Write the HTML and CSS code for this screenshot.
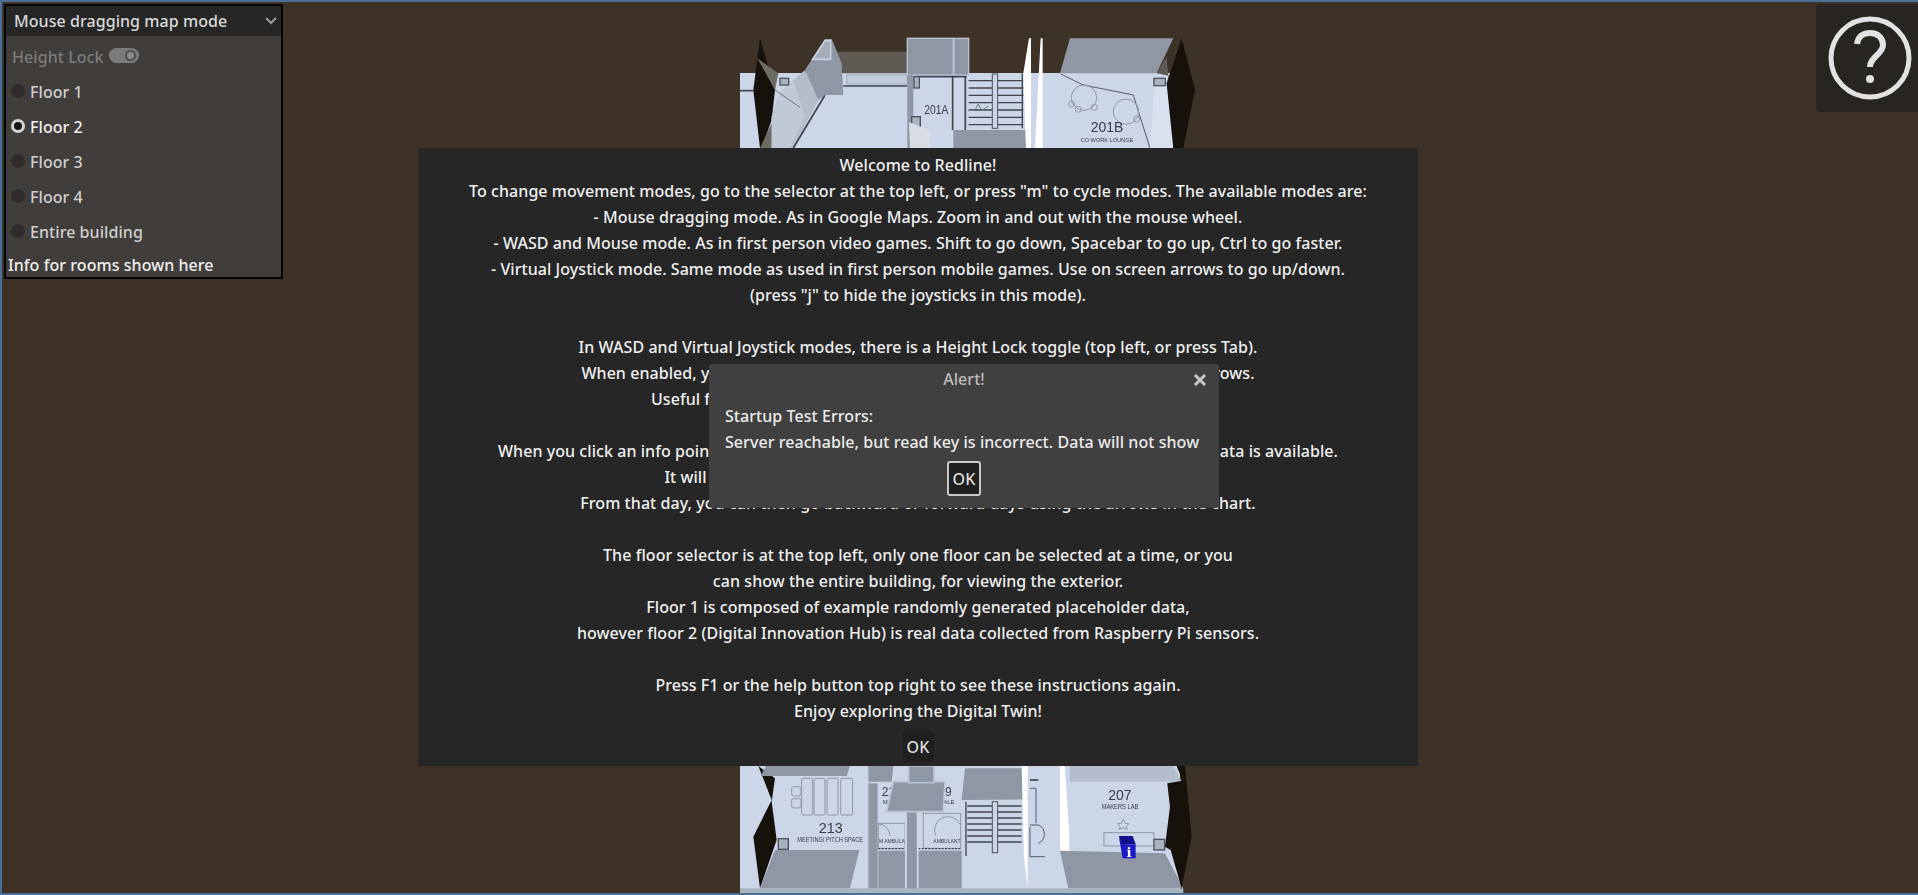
FILE: index.html
```html
<!DOCTYPE html>
<html lang="en">
<head>
    <meta charset="UTF-8">
    <title>Redline</title>
    <link rel="stylesheet" href="styles.css">
</head>
<body>
    <div class="window">
        <!-- 3D floor view, only the top and bottom show around the dialog -->
        <svg class="map" viewBox="2 2 1916 891" width="1916" height="891">
            <rect class="floor" x="740" y="73" width="433" height="700"/>
            <rect class="floor" x="740" y="760" width="440" height="133"/>

            <g transform="translate(730 20) scale(0.3333)">
                <polygon class="dark" points="90,55 135,210 125,300 95,384 90,384 70,210"/>
                <polygon class="wedge" points="82,115 145,160 135,210"/>
                <polygon class="wedge" points="125,310 135,384 90,384"/>
                <polygon class="pale" points="225,150 265,240 190,384 125,384 125,290 150,215"/>
                <polygon class="pale2" points="190,180 225,290 180,384 125,384 125,290 150,215"/>
                <polygon class="wall" points="320,95 532,95 532,160 340,160"/>
                <rect class="corridor" x="350" y="165" width="182" height="27"/>
                <line class="thick" x1="340" y1="198" x2="532" y2="198"/>
                <line class="thick" x1="30" y1="212" x2="70" y2="212"/>
                <line class="thick" x1="285" y1="225" x2="190" y2="384"/>
                <line class="thin" x1="135" y1="210" x2="210" y2="262"/>
                <rect class="lift" x="150" y="175" width="26" height="20"/>
                <polygon class="grey" points="225,150 285,57 305,57 335,130 340,225 285,225 265,240"/>
                <polygon class="grey-in" points="248,118 302,118 302,62 285,62"/>

                <rect class="grey edged" x="532" y="55" width="184" height="110"/>
                <line class="edge" x1="671" y1="55" x2="671" y2="165"/>
                <rect class="grey" x="532" y="165" width="18" height="219"/>
                <line class="thick" x1="552" y1="170" x2="710" y2="170"/>
                <line class="thick" x1="668" y1="170" x2="668" y2="330"/>
                <line class="thick" x1="706" y1="170" x2="706" y2="330"/>
                <rect class="lift" x="552" y="170" width="16" height="34"/>
                <rect class="lift" x="545" y="290" width="26" height="30"/>
                <polygon class="door" points="537,306 598,330 602,384 540,384"/>
                <text class="lbl" x="583" y="282" font-size="36" textLength="72" lengthAdjust="spacingAndGlyphs">201A</text>

                <g class="stairs">
                    <line x1="716" y1="182" x2="880" y2="182"/>
                    <line x1="716" y1="204" x2="880" y2="204"/>
                    <line x1="716" y1="226" x2="880" y2="226"/>
                    <line x1="716" y1="248" x2="880" y2="248"/>
                    <line x1="716" y1="270" x2="880" y2="270"/>
                    <line x1="716" y1="292" x2="880" y2="292"/>
                    <line x1="716" y1="314" x2="880" y2="314"/>
                    <line x1="877" y1="160" x2="877" y2="325"/>
                </g>
                <rect class="rail" x="787" y="162" width="16" height="163"/>
                <polyline class="thin" points="716,272 735,270 745,252 755,272 775,258"/>
                <polygon class="grey" points="670,330 895,330 890,384 670,384"/>
                <polygon class="white" points="880,160 897,55 903,55 903,384 888,384"/>
                <polygon class="white" points="915,384 932,55 938,55 938,384"/>

                <polygon class="grey" points="990,160 1020,55 1330,55 1280,160"/>
                <polyline class="line" points="992,162 1060,195 1210,225 1260,384"/>
                <circle class="plan" cx="1062" cy="233" r="38"/>
                <circle class="plan" cx="1188" cy="275" r="38"/>
                <circle class="plan" cx="1025" cy="252" r="9"/>
                <circle class="plan" cx="1045" cy="268" r="9"/>
                <circle class="plan" cx="1093" cy="262" r="9"/>
                <circle class="plan" cx="1220" cy="297" r="9"/>
                <text class="lbl" x="1082" y="337" font-size="46" textLength="98" lengthAdjust="spacingAndGlyphs">201B</text>
                <text class="lbl" x="1052" y="365" font-size="18" textLength="158" lengthAdjust="spacingAndGlyphs">CO WORK LOUNGE</text>
                <polygon class="pale3" points="1275,175 1308,175 1330,384 1260,384"/>
                <rect class="lift" x="1272" y="175" width="34" height="22"/>
                <polygon class="wall" points="1280,160 1310,110 1335,384 1330,170"/>
                <polygon class="dark" points="1355,55 1395,210 1360,384 1330,384 1310,190"/>
            </g>

            <g transform="translate(730 760) scale(0.3333)">
                <rect class="band" x="30" y="385" width="1330" height="16"/>
                <polygon class="dark" points="85,18 135,55 125,125 140,240 90,385 70,230 125,120"/>
                <polygon class="grey" points="92,48 108,18 360,18 350,48"/>
                <polygon class="grey" points="135,270 388,270 360,385 90,385"/>
                <g class="plan">
                    <rect x="215" y="55" width="33" height="110" rx="4"/>
                    <rect x="252" y="55" width="33" height="110" rx="4"/>
                    <rect x="291" y="55" width="33" height="110" rx="4"/>
                    <rect x="332" y="55" width="36" height="110" rx="4"/>
                    <rect x="185" y="80" width="28" height="28" rx="6"/>
                    <rect x="185" y="116" width="28" height="28" rx="6"/>
                </g>
                <rect class="lift" x="145" y="236" width="30" height="32"/>
                <text class="lbl" x="266" y="220" font-size="46" textLength="72" lengthAdjust="spacingAndGlyphs">213</text>
                <text class="lbl" x="202" y="247" font-size="19" textLength="197" lengthAdjust="spacingAndGlyphs">MEETING/ PITCH SPACE</text>

                <polygon class="grey" points="415,18 490,18 485,65 415,65"/>
                <rect class="grey" x="415" y="70" width="28" height="315"/>
                <text class="lbl" x="455" y="108" font-size="36">21</text>
                <text class="lbl" x="645" y="108" font-size="36">9</text>
                <text class="lbl" x="458" y="132" font-size="18">MA</text>
                <text class="lbl" x="640" y="132" font-size="18">ALE</text>
                <g class="plan">
                    <rect x="445" y="190" width="80" height="75"/>
                    <rect x="580" y="160" width="112" height="105"/>
                    <path d="M445 192 A36 36 0 0 1 480 228 M690 192 A36 36 0 0 0 618 228"/>
                </g>
                <text class="lbl" x="447" y="250" font-size="15">M AMBULANT</text>
                <text class="lbl" x="610" y="250" font-size="15">AMBULANT</text>
                <line class="thick2" x1="445" y1="266" x2="695" y2="266"/>
                <rect class="grey" x="445" y="272" width="250" height="113"/>
                <rect class="strip" x="525" y="160" width="6" height="225"/>
                <rect class="strip" x="560" y="160" width="6" height="225"/>
                <rect class="grey" x="531" y="155" width="29" height="230"/>
                <polygon class="grey edged2" points="490,65 645,65 640,155 470,155"/>
                <rect class="grey edged2" x="536" y="18" width="76" height="50"/>

                <polygon class="grey" points="705,25 880,25 893,118 695,120"/>
                <g class="stairs">
                    <line x1="712" y1="138" x2="875" y2="138"/>
                    <line x1="712" y1="156" x2="875" y2="156"/>
                    <line x1="712" y1="174" x2="875" y2="174"/>
                    <line x1="712" y1="192" x2="875" y2="192"/>
                    <line x1="712" y1="210" x2="875" y2="210"/>
                    <line x1="712" y1="228" x2="875" y2="228"/>
                    <line x1="712" y1="246" x2="875" y2="246"/>
                    <line x1="708" y1="125" x2="708" y2="288"/>
                </g>
                <rect class="rail" x="787" y="125" width="16" height="153"/>
                <polygon class="white" points="875,18 893,18 893,385 882,290"/>
                <line class="thick" x1="900" y1="60" x2="925" y2="60"/>
                <path class="line" d="M900 85 H918 V190 M900 195 H925 A30 30 0 0 1 925 250 M900 200 V290 H945"/>
                <polygon class="white" points="990,18 1004,18 1018,220 1018,290 990,275"/>

                <polygon class="veil" points="1018,18 1330,18 1355,65 1020,65"/>
                <text class="lbl" x="1135" y="120" font-size="46" textLength="70" lengthAdjust="spacingAndGlyphs">207</text>
                <text class="lbl" x="1115" y="148" font-size="20" textLength="110" lengthAdjust="spacingAndGlyphs">MAKERS LAB</text>
                <polygon class="plan" points="1180,178 1186,190 1197,191 1189,199 1192,208 1180,203 1168,208 1171,199 1163,191 1174,190"/>
                <rect class="plan" x="1122" y="218" width="150" height="40"/>
                <rect class="lift" x="1272" y="238" width="32" height="32"/>
                <polygon class="grey" points="990,272 1305,280 1360,385 1015,385"/>
                <polygon class="cube-top" points="1167,228 1208,228 1217,252 1175,255"/>
                <polygon class="cube" points="1167,232 1178,255 1217,252 1217,295 1178,295"/>
                <text class="cube-i" x="1197" y="292" font-size="40" text-anchor="middle">i</text>
                <polygon class="dark" points="1340,18 1365,18 1385,230 1355,385 1322,270 1305,260 1320,140 1312,70 1358,62"/>
            </g>
        </svg>

        <div class="side-panel">
            <div class="mode-select">
                <span>Mouse dragging map mode</span>
                <svg class="chevron" width="12" height="8" viewBox="0 0 12 8"><polyline points="1,1 6,6 11,1"/></svg>
            </div>
            <div class="panel-row height-lock">
                <span>Height Lock</span>
                <span class="toggle"><span class="toggle-knob"></span></span>
            </div>
            <div class="panel-row floor-row"><span class="radio"></span>Floor 1</div>
            <div class="panel-row floor-row selected"><span class="radio"></span>Floor 2</div>
            <div class="panel-row floor-row"><span class="radio"></span>Floor 3</div>
            <div class="panel-row floor-row"><span class="radio"></span>Floor 4</div>
            <div class="panel-row floor-row"><span class="radio"></span>Entire building</div>
            <div class="room-info">Info for rooms shown here</div>
        </div>

        <button class="help-btn" aria-label="Help">
            <svg width="90" height="90" viewBox="0 0 90 90">
                <circle class="help-ring" cx="45" cy="45" r="39"/>
                <path class="help-mark" d="M32 31 C33 23 39 20 45 20 C53 20 58 25 58 32 C58 41 45 44 45 54"/>
                <circle class="help-dot" cx="45" cy="66" r="4"/>
            </svg>
        </button>

        <div class="welcome">
            <p class="welcome-text">Welcome to Redline!
To change movement modes, go to the selector at the top left, or press "m" to cycle modes. The available modes are:
- Mouse dragging mode. As in Google Maps. Zoom in and out with the mouse wheel.
- WASD and Mouse mode. As in first person video games. Shift to go down, Spacebar to go up, Ctrl to go faster.
- Virtual Joystick mode. Same mode as used in first person mobile games. Use on screen arrows to go up/down.
(press "j" to hide the joysticks in this mode).

In WASD and Virtual Joystick modes, there is a Height Lock toggle (top left, or press Tab).
When enabled, you stay at the same height and cannot move with the up/down arrows.
Useful for moving around on one floor without changing your height.

When you click an info point, a chart will appear showing the room's history, if any historical data is available.
It will open on the most recent day that has sensor data available.
From that day, you can then go backward or forward days using the arrows in the chart.

The floor selector is at the top left, only one floor can be selected at a time, or you
can show the entire building, for viewing the exterior.
Floor 1 is composed of example randomly generated placeholder data,
however floor 2 (Digital Innovation Hub) is real data collected from Raspberry Pi sensors.

Press F1 or the help button top right to see these instructions again.
Enjoy exploring the Digital Twin!</p>
            <button class="ok-btn">OK</button>
        </div>

        <div class="alert">
            <div class="alert-title">Alert!</div>
            <svg class="alert-close" width="14" height="14" viewBox="0 0 14 14"><path d="M2 2 L12 12 M12 2 L2 12"/></svg>
            <p class="alert-text">Startup Test Errors:
Server reachable, but read key is incorrect. Data will not show</p>
            <button class="ok-btn framed">OK</button>
        </div>
    </div>
</body>
</html>
```

FILE: styles.css
```css
html, body {
    margin: 0;
    height: 100%;
    overflow: hidden;
}
body {
    font-family: "Noto Sans", "Open Sans", sans-serif;
    font-size: 16px;
    font-weight: 500;
    letter-spacing: 0.06px;
    color: #e6e6e6;
}
button {
    font: inherit;
    letter-spacing: inherit;
    color: inherit;
    padding: 0;
    border: 0;
}
.window {
    position: relative;
    box-sizing: border-box;
    height: 895px;
    background-color: #3e3226;
    border: 2px solid #4a6f98;
    border-right: 0;
}
.map {
    position: absolute;
    top: 0;
    left: 0;
    filter: blur(0.4px);
}

/* map shapes */
.floor { fill: #cbd7e8; }
.dark { fill: #16110b; }
.wedge { fill: #6e6a64; }
.pale { fill: #b4bec9; }
.pale2 { fill: #c0cad6; }
.pale3 { fill: #d8e2ef; }
.wall { fill: #5f5a53; }
.corridor { fill: #c0cbd9; stroke: #a9b4c1; stroke-width: 4; }
.grey { fill: #8f97a4; }
.grey-in { fill: #a4aebb; stroke: #c5d1e1; stroke-width: 5; }
.edged { stroke: #b9c6d6; stroke-width: 4; }
.edged2 { stroke: #b9c6d6; stroke-width: 5; }
.edge { stroke: #b9c6d6; stroke-width: 6; }
.thick { stroke: #3f444c; stroke-width: 5; fill: none; }
.thick2 { stroke: #3f444c; stroke-width: 4; stroke-dasharray: 6 4; }
.thin { stroke: #6d7580; stroke-width: 3; fill: none; }
.line { stroke: #565c66; stroke-width: 3; fill: none; }
.plan, .plan rect, .plan path { fill: none; stroke: #8f98a7; stroke-width: 3; }
.lift { fill: #a9b3c0; stroke: #4e535b; stroke-width: 4; }
.door { fill: #d8dde4; }
.stairs line { stroke: #3f444c; stroke-width: 4; }
.rail { fill: #cbd7e8; stroke: #4e535b; stroke-width: 3; }
.white { fill: #ffffff; }
.band { fill: #a9b4c2; }
.strip { fill: #cbd7e8; }
.veil { fill: #b3bdcb; }
.lbl {
    font-family: "Liberation Sans", sans-serif;
    font-weight: 400;
    letter-spacing: 0;
    fill: #383c44;
}
.cube { fill: #1a1ac4; }
.cube-top { fill: #10108a; }
.cube-i {
    font-family: "DejaVu Serif", serif;
    font-weight: 700;
    fill: #ffffff;
}

/* top left panel */
.side-panel {
    position: absolute;
    top: 2px;
    left: 2px;
    box-sizing: border-box;
    width: 279px;
    height: 275px;
    background-color: #403d3a;
    border: 2px solid #000;
    display: flex;
    flex-direction: column;
}
.mode-select {
    height: 30px;
    flex: none;
    background-color: #262626;
    border-radius: 0 0 3px 3px;
    display: flex;
    align-items: center;
    justify-content: space-between;
    padding: 0 4px 0 8px;
    color: #d8d8d8;
}
.chevron polyline {
    fill: none;
    stroke: #9a9a9a;
    stroke-width: 2;
}
.panel-row {
    height: 35px;
    flex: none;
    display: flex;
    align-items: center;
    color: #cfcfcf;
}
.height-lock {
    margin-top: 3px;
    padding-left: 6px;
    gap: 5px;
    color: #7d7b79;
}
.toggle {
    box-sizing: border-box;
    width: 30px;
    height: 15px;
    margin-top: -3px;
    border-radius: 8px;
    background-color: #7c7b7a;
    display: flex;
    justify-content: flex-end;
    padding: 2px 3px;
}
.toggle-knob {
    box-sizing: border-box;
    width: 11px;
    height: 11px;
    border-radius: 50%;
    border: 2px solid #4e4d4c;
    background-color: #8c8b8a;
}
.floor-row {
    padding-left: 5px;
    gap: 5px;
}
.radio {
    box-sizing: border-box;
    width: 14px;
    height: 14px;
    margin-top: -2px;
    border-radius: 50%;
    background-color: #2e2d2c;
}
.selected {
    color: #f0f0f0;
}
.selected .radio {
    background-color: #151515;
    border: 3px solid #d4d4d4;
}
.room-info {
    margin-top: 3px;
    padding-left: 2px;
    line-height: 26px;
    color: #f0f0f0;
}

/* help button top right */
.help-btn {
    position: absolute;
    top: 2px;
    right: 0;
    box-sizing: border-box;
    width: 102px;
    height: 108px;
    padding-left: 6px;
    background-color: #28241f;
    border-radius: 3px 0 0 3px;
    display: flex;
    align-items: center;
    justify-content: center;
}
.help-ring, .help-mark {
    fill: none;
    stroke: #e2e2e2;
    stroke-width: 5;
}
.help-mark {
    stroke-width: 6;
}
.help-dot {
    fill: #e2e2e2;
}

/* dialogs */
.welcome {
    position: absolute;
    top: 146px;
    left: 416px;
    box-sizing: border-box;
    width: 1000px;
    height: 618px;
    padding-top: 4px;
    background-color: #262626;
    display: flex;
    flex-direction: column;
    align-items: center;
}
.welcome-text {
    margin: 0;
    line-height: 26px;
    text-align: center;
    white-space: pre-line;
    color: #f0f0f0;
}
.ok-btn {
    width: 31px;
    height: 31px;
    margin-top: 7px;
    background-color: #1f1f1f;
    border-radius: 3px;
    color: #dedede;
    flex: none;
}
.ok-btn.framed {
    box-sizing: border-box;
    width: 34px;
    height: 35px;
    margin-top: 6px;
    border: 2px solid #c8c8c8;
    background-color: #1f1f1f;
}
.alert {
    position: absolute;
    top: 362px;
    left: 707px;
    box-sizing: border-box;
    width: 510px;
    height: 144px;
    padding: 2px 16px 0;
    background-color: #404040;
    border-radius: 3px;
    display: flex;
    flex-direction: column;
    align-items: center;
}
.alert-title {
    line-height: 26px;
    color: #bdbdbd;
}
.alert-close {
    position: absolute;
    top: 9px;
    right: 12px;
}
.alert-close path {
    fill: none;
    stroke: #c8c8c8;
    stroke-width: 3;
}
.alert-text {
    margin: 11px 0 0;
    align-self: flex-start;
    line-height: 26px;
    white-space: pre-line;
    color: #ececec;
}
```
